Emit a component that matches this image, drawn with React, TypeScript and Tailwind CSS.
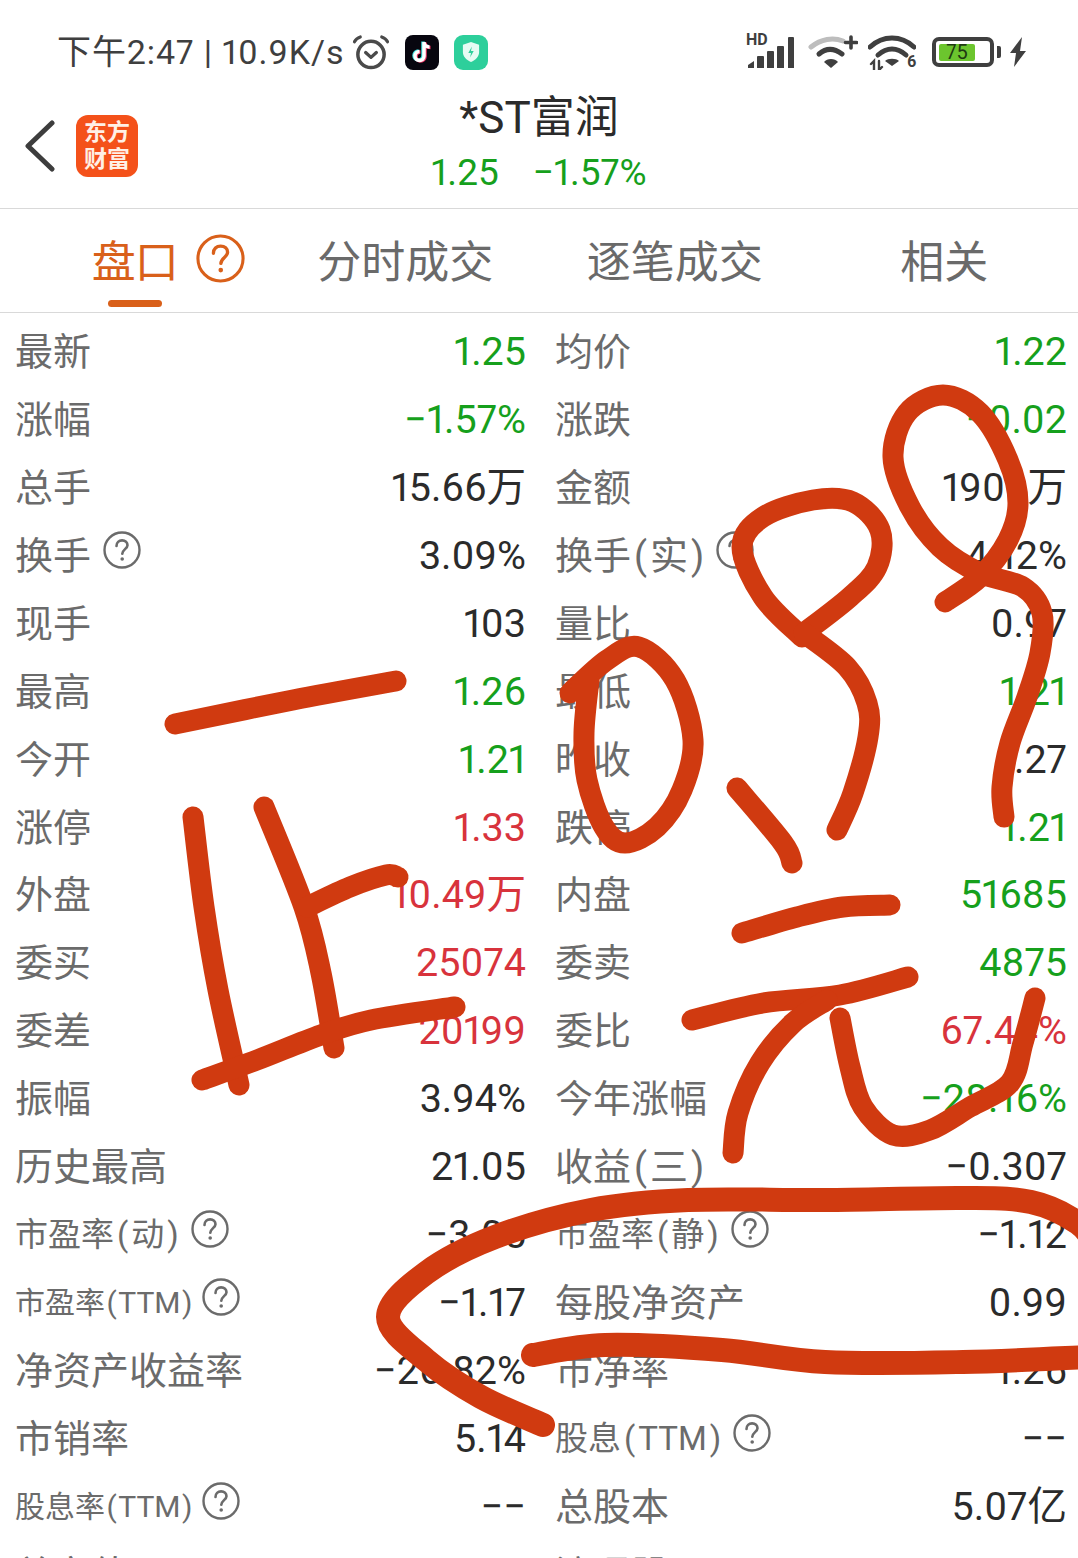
import clsx from 'clsx'

const FONT = "font-['Roboto','Noto_Sans_CJK_SC',sans-serif]"

type Tone = 'up' | 'down' | 'flat'

interface Cell {
  label: string
  value: string
  tone: Tone
  help?: boolean
  size?: string
}

const TONE_STYLE: Record<Tone, string> = {
  up: 'text-[#d8333c]',
  down: 'text-[#16a01c]',
  flat: 'text-[#2b2b2b]',
}

const ROWS: [Cell, Cell][] = [
  [{ label: '最新', value: '1.25', tone: 'down' }, { label: '均价', value: '1.22', tone: 'down' }],
  [{ label: '涨幅', value: '−1.57%', tone: 'down' }, { label: '涨跌', value: '−0.02', tone: 'down' }],
  [{ label: '总手', value: '15.66万', tone: 'flat' }, { label: '金额', value: '1906万', tone: 'flat' }],
  [{ label: '换手', value: '3.09%', tone: 'flat', help: true }, { label: '换手(实)', value: '4.12%', tone: 'flat', help: true }],
  [{ label: '现手', value: '103', tone: 'flat' }, { label: '量比', value: '0.97', tone: 'flat' }],
  [{ label: '最高', value: '1.26', tone: 'down' }, { label: '最低', value: '1.21', tone: 'down' }],
  [{ label: '今开', value: '1.21', tone: 'down' }, { label: '昨收', value: '1.27', tone: 'flat' }],
  [{ label: '涨停', value: '1.33', tone: 'up' }, { label: '跌停', value: '1.21', tone: 'down' }],
  [{ label: '外盘', value: '10.49万', tone: 'up' }, { label: '内盘', value: '51685', tone: 'down' }],
  [{ label: '委买', value: '25074', tone: 'up' }, { label: '委卖', value: '4875', tone: 'down' }],
  [{ label: '委差', value: '20199', tone: 'up' }, { label: '委比', value: '67.44%', tone: 'up' }],
  [{ label: '振幅', value: '3.94%', tone: 'flat' }, { label: '今年涨幅', value: '−28.16%', tone: 'down' }],
  [{ label: '历史最高', value: '21.05', tone: 'flat' }, { label: '收益(三)', value: '−0.307', tone: 'flat' }],
  [
    { label: '市盈率(动)', value: '−3.05', tone: 'flat', help: true, size: 'text-[33px]' },
    { label: '市盈率(静)', value: '−1.12', tone: 'flat', help: true, size: 'text-[33px]' },
  ],
  [
    { label: '市盈率(TTM)', value: '−1.17', tone: 'flat', help: true, size: 'text-[30px]' },
    { label: '每股净资产', value: '0.99', tone: 'flat' },
  ],
  [{ label: '净资产收益率', value: '−26.82%', tone: 'flat' }, { label: '市净率', value: '1.26', tone: 'flat' }],
  [
    { label: '市销率', value: '5.14', tone: 'flat' },
    { label: '股息(TTM)', value: '−−', tone: 'flat', help: true, size: 'text-[33px]' },
  ],
  [
    { label: '股息率(TTM)', value: '−−', tone: 'flat', help: true, size: 'text-[30px]' },
    { label: '总股本', value: '5.07亿', tone: 'flat' },
  ],
  [{ label: '总市值', value: '', tone: 'flat' }, { label: '流通股', value: '', tone: 'flat' }],
]

// hand drawn marks, traced from the picture as point lists
const INK: [number, number][][] = [
  [[175, 724], [293, 700], [396, 681]],
  [[193, 817], [204, 907], [218, 990], [239, 1085]],
  [[264, 807], [304, 907], [321, 973], [334, 1048]],
  [[307, 907], [350, 887], [386, 875], [398, 877]],
  [[202, 1080], [257, 1060], [321, 1035], [371, 1020], [455, 1007]],
  [[570, 693], [607, 660], [639, 647], [675, 680], [693, 740], [682, 790], [657, 827], [625, 843], [604, 827], [587, 780], [584, 733], [589, 680]],
  [[802, 637], [763, 597], [742, 547], [763, 517], [813, 500], [853, 502], [880, 530], [877, 567], [850, 597], [804, 633]],
  [[804, 633], [847, 667], [867, 703], [868, 737], [853, 793], [837, 830]],
  [[737, 788], [783, 843], [792, 863]],
  [[945, 602], [980, 577], [1008, 540], [1018, 503], [1008, 460], [980, 413], [943, 395], [907, 413], [893, 457], [910, 507], [940, 547], [980, 573], [1023, 587], [1042, 613], [1040, 653], [1027, 697], [1010, 743], [1002, 787], [1004, 817]],
  [[742, 933], [797, 917], [843, 907], [890, 905]],
  [[692, 1020], [763, 1003], [840, 995], [908, 977]],
  [[733, 1153], [738, 1113], [760, 1063], [793, 1023], [827, 1000]],
  [[840, 1018], [850, 1067], [863, 1107], [893, 1135], [930, 1130], [970, 1107], [1010, 1083], [1023, 1043], [1035, 998]],
  [[543, 1425], [481, 1397], [426, 1360], [388, 1317], [426, 1273], [495, 1237], [591, 1210], [688, 1200], [825, 1200], [963, 1198], [1031, 1202], [1078, 1223], [1100, 1250]],
  [[533, 1355], [605, 1345], [722, 1350], [825, 1362], [963, 1362], [1090, 1357]],
]

function smooth(points: [number, number][]) {
  let d = `M${points[0][0]} ${points[0][1]}`
  for (let i = 0; i < points.length - 1; i++) {
    const p0 = points[i - 1] ?? points[i]
    const p1 = points[i]
    const p2 = points[i + 1]
    const p3 = points[i + 2] ?? p2
    const c1x = p1[0] + (p2[0] - p0[0]) / 6
    const c1y = p1[1] + (p2[1] - p0[1]) / 6
    const c2x = p2[0] - (p3[0] - p1[0]) / 6
    const c2y = p2[1] - (p3[1] - p1[1]) / 6
    d += ` C${c1x} ${c1y} ${c2x} ${c2y} ${p2[0]} ${p2[1]}`
  }
  return d
}

function HelpIcon({ className }: { className?: string }) {
  return (
    <svg viewBox="0 0 38 38" fill="none" stroke="currentColor" className={className}>
      <circle cx="19" cy="19" r="17.5" strokeWidth="2.4" />
      <path d="M13.5 15c0-3.6 2.4-5.6 5.6-5.6s5.4 2 5.4 4.8c0 3.6-5.2 4.4-5.2 8.6" strokeWidth="2.6" strokeLinecap="round" />
      <circle cx="19.2" cy="28" r="1.8" fill="currentColor" stroke="none" />
    </svg>
  )
}

function StatusIcons() {
  return (
    <div className="flex items-center">
      {/* HD signal */}
      <div className="relative h-[32px] w-[50px]">
        <span className="absolute left-0 -top-[4px] text-[16px] leading-[16px] font-bold text-[#3f3f3f]">HD</span>
        <svg viewBox="0 0 50 32" className="absolute inset-0 h-full w-full" fill="#3f3f3f">
          <path d="M2 32v-3l6-4v7zM11 32v-11a1 1 0 0 1 1-1h5a1 1 0 0 1 1 1v11zM21 32v-16a1 1 0 0 1 1-1h5a1 1 0 0 1 1 1v16zM31 32v-21a1 1 0 0 1 1-1h5a1 1 0 0 1 1 1v21zM42 32v-30a1 1 0 0 1 1-1h4a1 1 0 0 1 1 1v30z" />
        </svg>
      </div>
      {/* wifi with plus */}
      <svg viewBox="0 0 50 34" className="ml-[12px] h-[34px] w-[50px]" fill="none" strokeLinecap="round">
        <path d="M3 12c10-8 22-10 32-6" stroke="#bdbdbd" strokeWidth="5" />
        <path d="M11 19c7-6 15-6 23 0" stroke="#3f3f3f" strokeWidth="5" />
        <path d="M23 33l-7-6c3-4 11-4 14 0z" fill="#3f3f3f" />
        <path d="M43 2v11M37.500 7.500h11" stroke="#3f3f3f" strokeWidth="3.600" />
      </svg>
      {/* wifi 6 */}
      <svg viewBox="0 0 48 36" className="ml-[10px] h-[36px] w-[48px]" fill="none" strokeLinecap="round">
        <path d="M2 13c13-12 31-12 44 0" stroke="#3f3f3f" strokeWidth="5" />
        <path d="M10 21c9-8 19-8 28 0" stroke="#3f3f3f" strokeWidth="5" />
        <path d="M24 32l-7-5c3-3 11-3 14 0z" fill="#3f3f3f" />
        <path d="M3 30l3-3v9M11 27v9l3-3" stroke="#3f3f3f" strokeWidth="2.400" />
      </svg>
      <span className="ml-[-9px] mt-[18px] w-[11px] text-[16px] leading-[15px] font-bold text-[#3f3f3f]">6</span>
      {/* battery */}
      <div className="ml-[14px] flex h-[30px] w-[62px] items-center rounded-[7px] border-[4px] border-[#3f3f3f] pl-[3px]">
        <span className="h-[17px] w-[36px] rounded-[2px] bg-[#6cc52e] text-center text-[20px] leading-[17px] text-[#1f3a12]">75</span>
      </div>
      <span className="ml-[3px] h-[12px] w-[4px] rounded-r-[2px] bg-[#3f3f3f]" />
      <svg viewBox="0 0 18 30" className="ml-[8px] h-[30px] w-[18px]" fill="#3f3f3f">
        <path d="M13 0L1 16h6L5 30l12-16h-6z" />
      </svg>
    </div>
  )
}

function StatusBar() {
  return (
    <div className="flex h-[96px] items-center justify-between pb-[2px] pl-[57px] pr-[51px] pt-[10px]">
      <div className="flex items-center">
        <span className="text-[34px] leading-none tracking-[0.9px] text-[#3f3f3f]">下午2:47 | 10.9K/s</span>
        {/* alarm */}
        <svg viewBox="0 0 40 38" fill="none" stroke="#4a4a4a" strokeLinecap="round" className="ml-[7px] h-[37px] w-[40px]">
          <circle cx="20" cy="21" r="13.500" strokeWidth="3.600" />
          <path d="M14.500 19l5.500 5 5.500-5" strokeWidth="3.400" strokeLinejoin="round" />
          <path d="M3 8c1-2 3-4 6-5M37 8c-1-2-3-4-6-5" strokeWidth="3.200" />
        </svg>
        {/* tiktok */}
        <div className="ml-[14px] flex h-[35px] w-[34px] items-center justify-center rounded-[8px] bg-[#07060f]">
          <svg viewBox="0 0 24 26" className="h-[26px] w-[24px]" fill="none" strokeWidth="3.500">
            <path d="M14 3v14a4.500 4.500 0 1 1-4.500-4.500M14 3c0 3 2.500 5 5.500 5" stroke="#3fe3e3" transform="translate(-1 -.5)" />
            <path d="M14 3v14a4.500 4.500 0 1 1-4.500-4.500M14 3c0 3 2.500 5 5.500 5" stroke="#f5386a" transform="translate(1 .5)" />
            <path d="M14 3v14a4.500 4.500 0 1 1-4.500-4.500M14 3c0 3 2.500 5 5.500 5" stroke="#ffffff" />
          </svg>
        </div>
        {/* shield */}
        <div className="ml-[15px] flex h-[35px] w-[34px] items-center justify-center rounded-[9px] bg-[#2dcf9b]">
          <svg viewBox="0 0 20 24" className="h-[22px] w-[18px]">
            <path d="M10 1l9 3v8c0 5-4 9-9 11-5-2-9-6-9-11V4z" fill="#e6fbf3" />
            <path d="M11 6l-4 7h3l-1 5 4-7h-3z" fill="#2dcf9b" />
          </svg>
        </div>
      </div>
      <StatusIcons />
    </div>
  )
}

function Header() {
  return (
    <div className="relative flex h-[113px] flex-col items-center border-b border-[#d9d9d9]">
      <div className="absolute left-[24px] top-[19px] flex items-center">
        <svg viewBox="0 0 32 52" fill="none" stroke="#3d3d3d" strokeWidth="5" strokeLinecap="round" strokeLinejoin="round" className="h-[52px] w-[32px]">
          <path d="M28 3L4 26l24 23" />
        </svg>
        <div className="ml-[20px] flex h-[62px] w-[62px] flex-col items-center justify-center rounded-[12px] bg-[#f4511a] text-[23px] leading-[27px] font-bold text-[#fff0e6]">
          <span>东方</span>
          <span>财富</span>
        </div>
      </div>
      <div className="mt-[-2px] text-[44px] leading-[48px] text-[#2b2b2b]">*ST富润</div>
      <div className="mt-[10px] flex gap-[34px] text-[37px] leading-[42px] text-[#16a01c]">
        <span>1.25</span>
        <span>−1.57%</span>
      </div>
    </div>
  )
}

function Tabs() {
  return (
    <div className="grid h-[104px] grid-cols-4 border-b border-[#d9d9d9] text-[44px] leading-[50px] text-[#6a6a6a]">
      <div className="relative flex items-center justify-center pt-[5px] text-[#d9601a]">
        <div className="relative tracking-[-1px]">
          盘口
          <HelpIcon className="absolute left-[104px] top-[-4px] h-[49px] w-[49px]" />
        </div>
        <span className="absolute bottom-[5px] left-[108px] h-[7px] w-[54px] rounded-full bg-[#d9601a]" />
      </div>
      {['分时成交', '逐笔成交', '相关'].map((tab) => (
        <div key={tab} className="flex items-center justify-center pl-[2px] pt-[5px]">{tab}</div>
      ))}
    </div>
  )
}

function DataCell({ cell, right }: { cell: Cell; right?: boolean }) {
  const small = cell.size === 'text-[30px]'
  const hasParen = cell.label.includes('(')
  return (
    <div className={clsx('flex h-[67.95px] items-center justify-between', right ? 'pl-[16px] pr-[11px]' : 'pl-[15px] pr-[13px]')}>
      <div className="flex items-center text-[#6b6b6b]">
        <span className={clsx('leading-[44px]', cell.size ?? 'text-[38px]')}>
          {cell.label.split(/([()])/).map((part, i) =>
            part === '(' || part === ')' ? (
              <span key={i} className={small ? 'mx-[1.5px]' : 'mx-[3px]'}>{part}</span>
            ) : (
              part
            )
          )}
        </span>
        {cell.help && (
          <HelpIcon className={clsx('mt-[-12px] h-[38px] w-[38px]', small ? 'ml-[8px]' : hasParen ? 'ml-[9px]' : 'ml-[12px]')} />
        )}
      </div>
      <span className={clsx('text-[39.5px] leading-[44px]', TONE_STYLE[cell.tone])}>{cell.value}</span>
    </div>
  )
}

export default function App() {
  return (
    <div className={clsx('relative h-[1558px] w-[1078px] overflow-hidden bg-white proportional-nums', FONT)}>
      <StatusBar />
      <Header />
      <Tabs />
      <div className="grid grid-cols-2 pt-[5px]">
        {ROWS.map(([left, right]) => (
          <div key={left.label} className="contents">
            <DataCell cell={left} />
            <DataCell cell={right} right />
          </div>
        ))}
      </div>
      {/* pen marks drawn over the screenshot */}
      <svg viewBox="0 0 1078 1558" fill="none" stroke="#d03a10" strokeLinecap="round" strokeLinejoin="round" className="pointer-events-none absolute inset-0 h-full w-full">
        {INK.map((points, i) => (
          <path key={i} d={smooth(points)} strokeWidth={i >= 14 ? 24 : 21} />
        ))}
      </svg>
    </div>
  )
}
